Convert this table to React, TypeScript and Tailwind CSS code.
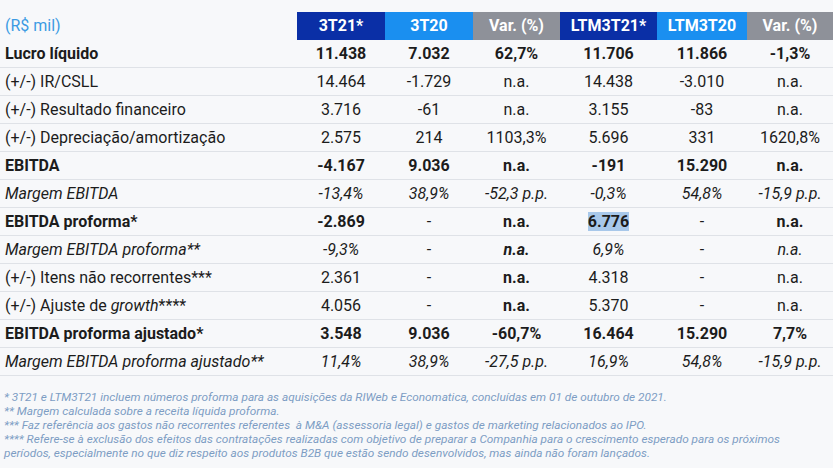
import React from "react";

type Cell = { v: string; b?: boolean; i?: boolean; hl?: boolean };
type Row = { label: React.ReactNode; bold?: boolean; italic?: boolean; cells: (string | Cell)[] };

const widths = ["w-[88px]", "w-[88px]", "w-[87px]", "w-[97px]", "w-[90px]", "w-[86px]"];

const headers = [
  { t: "3T21*", c: "bg-[#0a2fa6]" },
  { t: "3T20", c: "bg-[#1a8ff0]" },
  { t: "Var. (%)", c: "bg-[#8e9199]" },
  { t: "LTM3T21*", c: "bg-[#0a2fa6]" },
  { t: "LTM3T20", c: "bg-[#1a8ff0]" },
  { t: "Var. (%)", c: "bg-[#8e9199]" },
];

const rows: Row[] = [
  { label: "Lucro líquido", bold: true, cells: ["11.438", "7.032", "62,7%", "11.706", "11.866", "-1,3%"] },
  { label: "(+/-) IR/CSLL", cells: ["14.464", "-1.729", "n.a.", "14.438", "-3.010", "n.a."] },
  { label: "(+/-) Resultado financeiro", cells: ["3.716", "-61", "n.a.", "3.155", "-83", "n.a."] },
  { label: "(+/-) Depreciação/amortização", cells: ["2.575", "214", "1103,3%", "5.696", "331", "1620,8%"] },
  { label: "EBITDA", bold: true, cells: ["-4.167", "9.036", "n.a.", "-191", "15.290", "n.a."] },
  { label: "Margem EBITDA", italic: true, cells: ["-13,4%", "38,9%", "-52,3 p.p.", "-0,3%", "54,8%", "-15,9 p.p."] },
  {
    label: "EBITDA proforma*",
    bold: true,
    cells: ["-2.869", { v: "-", b: false }, "n.a.", { v: "6.776", b: true, hl: true }, { v: "-", b: false }, "n.a."],
  },
  {
    label: "Margem EBITDA proforma**",
    italic: true,
    cells: ["-9,3%", { v: "-", i: false }, { v: "n.a.", b: true, i: true }, "6,9%", { v: "-", i: false }, "n.a."],
  },
  { label: "(+/-) Itens não recorrentes***", cells: ["2.361", "-", { v: "n.a.", b: true }, "4.318", "-", "n.a."] },
  {
    label: (
      <>
        (+/-) Ajuste de <i>growth</i>****
      </>
    ),
    cells: ["4.056", "-", { v: "n.a.", b: true }, "5.370", "-", "n.a."],
  },
  { label: "EBITDA proforma ajustado*", bold: true, cells: ["3.548", "9.036", "-60,7%", "16.464", "15.290", "7,7%"] },
  {
    label: "Margem EBITDA proforma ajustado**",
    italic: true,
    cells: ["11,4%", "38,9%", "-27,5 p.p.", "16,9%", "54,8%", "-15,9 p.p."],
  },
];

export default function App() {
  return (
    <div className="w-[833px] h-[468px] bg-[#f7f8fa] text-[#1c1c1c] font-['Roboto','Liberation_Sans',sans-serif] overflow-hidden">
      <div className="pt-3">
        <div className="flex h-[28px] items-center">
          <div className="w-[297px] pl-[5px] text-[16px] text-[#3b9be3]">(R$ mil)</div>
          {headers.map((h, i) => (
            <div
              key={i}
              className={`${widths[i]} ${h.c} h-full flex items-center justify-center text-white font-bold text-[16px]`}
            >
              {h.t}
            </div>
          ))}
        </div>
        {rows.map((r, ri) => (
          <div key={ri} className="flex h-[28px] items-center border-b border-[#dfe2e7] text-[16px]">
            <div className={`w-[297px] pl-[5px] ${r.bold ? "font-bold" : ""} ${r.italic ? "italic" : ""}`}>{r.label}</div>
            {r.cells.map((c, ci) => {
              const cell: Cell = typeof c === "string" ? { v: c } : c;
              const b = cell.b ?? r.bold;
              const it = cell.i ?? r.italic;
              return (
                <div
                  key={ci}
                  className={`${widths[ci]} text-center ${b ? "font-bold" : ""} ${it ? "italic" : ""}`}
                >
                  <span className={cell.hl ? "bg-[#a8c8ea]" : ""}>{cell.v}</span>
                </div>
              );
            })}
          </div>
        ))}
      </div>
      <div className="mt-[14px] pl-[4px] text-[11.8px] leading-[14px] italic text-[#7d9dc4] whitespace-nowrap">
        <div>* 3T21 e LTM3T21 incluem números proforma para as aquisições da RIWeb e Economatica, concluídas em 01 de outubro de 2021.</div>
        <div>** Margem calculada sobre a receita líquida proforma.</div>
        <div>*** Faz referência aos gastos não recorrentes referentes &nbsp;à M&amp;A (assessoria legal) e gastos de marketing relacionados ao IPO.</div>
        <div>
          **** Refere-se à exclusão dos efeitos das contratações realizadas com objetivo de preparar a Companhia para o crescimento esperado para os próximos
        </div>
        <div>períodos, especialmente no que diz respeito aos produtos B2B que estão sendo desenvolvidos, mas ainda não foram lançados.</div>
      </div>
    </div>
  );
}
